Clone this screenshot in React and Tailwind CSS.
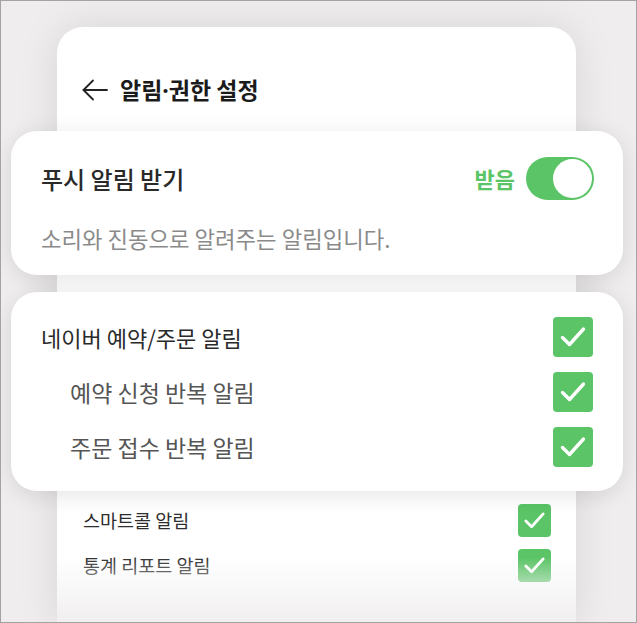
function Check({ size }) {
  return (
    <div
      className="flex items-center justify-center rounded-[4px] bg-[#5ac466]"
      style={{ width: size, height: size }}
    >
      <svg viewBox="0 0 40 40" width={size} height={size}>
        <polyline
          points="9.5,20.5 16.5,27.5 30.5,12"
          fill="none"
          stroke="#fff"
          strokeWidth="3.4"
          strokeLinecap="round"
          strokeLinejoin="round"
        />
      </svg>
    </div>
  );
}

export default function App() {
  return (
    <div className="w-[637px] h-[623px] border border-[#a3a3a3] bg-[#efedee] overflow-hidden pt-[26px] pl-[56px] font-['Noto_Sans_CJK_KR',sans-serif]">
      <div className="relative w-[519px] h-[600px] bg-white rounded-t-[26px] shadow-[0_0_40px_rgba(0,0,0,0.1)]">
        {/* header */}
        <div className="h-[104px] pt-[22px] pl-[25px] flex items-center gap-[12px]">
          <svg width="26" height="22" viewBox="0 0 26 22" fill="none" stroke="#222" strokeWidth="1.8" strokeLinecap="round" strokeLinejoin="round">
            <polyline points="11,1.5 1.5,11 11,20.5" />
            <line x1="1.5" y1="11" x2="25" y2="11" />
          </svg>
          <h1 className="text-[23px] font-bold text-[#1b1b1b] leading-none">
            알림<span className="font-['Noto_Sans',sans-serif]">·</span>권한 설정
          </h1>
        </div>

        {/* push card */}
        <div className="relative z-10 -ml-[46px] -mr-[47px] rounded-[26px] bg-white shadow-[0_4px_22px_rgba(0,0,0,0.11)] pt-[26px] pb-[22px] pl-[30px] pr-[29px]">
          <div className="h-[43px] flex items-center justify-between">
            <span className="text-[24px] font-medium text-[#2a2a2a]">푸시 알림 받기</span>
            <div className="flex items-center gap-[11px]">
              <span className="text-[22px] font-bold text-[#5ac466]">받음</span>
              <div className="w-[68px] h-[43px] rounded-full bg-[#5ac466] flex items-center justify-end pr-[2px]">
                <div className="w-[39px] h-[39px] rounded-full bg-white" />
              </div>
            </div>
          </div>
          <p className="mt-[23px] text-[22.3px] leading-[30px] text-[#8a8a8a]">소리와 진동으로 알려주는 알림입니다.</p>
        </div>

        {/* naver card */}
        <div className="relative z-10 mt-[17px] -ml-[46px] -mr-[47px] rounded-[26px] bg-white shadow-[0_4px_22px_rgba(0,0,0,0.11)] pt-[25px] pb-[24px] pl-[30px] pr-[30px] flex flex-col gap-[15px]">
          <div className="h-[40px] flex items-center justify-between">
            <span className="text-[22px] text-[#2a2a2a]">네이버 예약/주문 알림</span>
            <Check size={40} />
          </div>
          <div className="h-[40px] flex items-center justify-between pl-[29px]">
            <span className="text-[23px] text-[#555]">예약 신청 반복 알림</span>
            <Check size={40} />
          </div>
          <div className="h-[40px] flex items-center justify-between pl-[29px]">
            <span className="text-[23px] text-[#555]">주문 접수 반복 알림</span>
            <Check size={40} />
          </div>
        </div>

        {/* other rows */}
        <div className="mt-[13px] pl-[26px] pr-[25px] flex flex-col gap-[12px]">
          <div className="h-[33px] flex items-center justify-between">
            <span className="text-[18.5px] text-[#2e2e2e]">스마트콜 알림</span>
            <Check size={33} />
          </div>
          <div className="h-[33px] flex items-center justify-between">
            <span className="text-[18.5px] text-[#2e2e2e]">통계 리포트 알림</span>
            <Check size={33} />
          </div>
        </div>

        {/* bottom fade */}
        <div className="absolute left-0 right-0 bottom-0 h-[70px] bg-gradient-to-b from-[#efedee00] via-[#f5f3f4b0] to-[#efedee]" />
      </div>
    </div>
  );
}
